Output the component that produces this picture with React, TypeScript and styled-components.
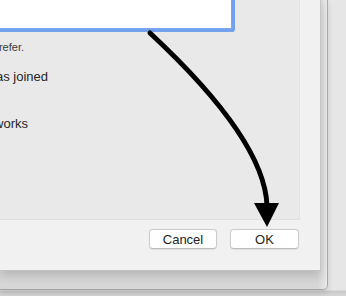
import styled, { createGlobalStyle } from "styled-components";

const Global = createGlobalStyle`
  html, body {
    margin: 0;
    padding: 0;
  }
  body {
    width: 346px;
    height: 296px;
    overflow: hidden;
    background: linear-gradient(#e6e6e6 0, #e6e6e6 290px, #cacaca 291px, #d6d6d6 296px);
    font-family: "Liberation Sans", Arial, sans-serif;
  }
`;

const Window = styled.div`
  position: relative;
  width: 328px;
  height: 290px;
  box-sizing: border-box;
  border-right: 1px solid #a9a9a9;
  border-bottom: 1px solid #a4a4a4;
  border-bottom-right-radius: 5px;
  background: linear-gradient(90deg, #d6d6d6 318px, #e9e9e9 327px);
  box-shadow: 0 3px 6px rgba(0, 0, 0, 0.12);
  overflow: hidden;
`;

const Sheet = styled.div`
  width: 321px;
  height: 271px;
  box-sizing: border-box;
  background: #f1f1f1;
  border-right: 1px solid #c6c6c6;
  border-bottom: 1px solid #c2c2c2;
  box-shadow: 0 4px 10px rgba(0, 0, 0, 0.16);
  display: flex;
  flex-direction: column;
`;

const Panel = styled.div`
  width: 300px;
  height: 220px;
  box-sizing: border-box;
  background: #e9e9e9;
  border-right: 1px solid #e2e2e2;
  border-bottom: 1px solid #e0e0e0;
  overflow: hidden;
`;

const Content = styled.div`
  margin-left: -260px;
  display: flex;
  flex-direction: column;
`;

const Field = styled.div`
  width: 492px;
  height: 60px;
  margin-top: -31px;
  box-sizing: border-box;
  background: #fff;
  border: 1px solid #7aa7ee;
  box-shadow: 0 0 0 3px #72a2ef;
  border-radius: 1px;
`;

const Line = styled.div<{ $end: number; $size: number; $gap: number }>`
  width: ${(p) => 260 + p.$end}px;
  margin-top: ${(p) => p.$gap}px;
  text-align: right;
  white-space: nowrap;
  font-size: ${(p) => p.$size}px;
  line-height: ${(p) => p.$size + 3}px;
  color: ${(p) => (p.$size < 13 ? "#3a3a3a" : "#262626")};
`;

const Footer = styled.div`
  display: flex;
  justify-content: flex-end;
  gap: 13px;
  padding: 9px 21px 0 0;
`;

const Button = styled.button<{ $w: number }>`
  width: ${(p) => p.$w}px;
  height: 20px;
  box-sizing: border-box;
  background: #fff;
  border: 1px solid #cdcdcd;
  border-bottom-color: #bdbdbd;
  border-radius: 4px;
  font-family: "Liberation Sans", Arial, sans-serif;
  font-size: 13px;
  color: #242424;
  padding: 0;
  box-shadow: 0 0.5px 1px rgba(0, 0, 0, 0.08);
`;

const Arrow = styled.svg`
  position: absolute;
  left: 0;
  top: 0;
  pointer-events: none;
`;

export default function App() {
  return (
    <>
      <Global />
      <Window>
        <Sheet>
          <Panel>
            <Content>
              <Field />
              <Line $end={24} $size={11} $gap={11}>
                Choose the networks you prefer.
              </Line>
              <Line $end={48} $size={13} $gap={15}>
                Notify when a new device has joined
              </Line>
              <Line $end={28} $size={13} $gap={31}>
                Ask to join new networks
              </Line>
            </Content>
          </Panel>
          <Footer>
            <Button $w={68}>Cancel</Button>
            <Button $w={69}>OK</Button>
          </Footer>
        </Sheet>
        <Arrow width="328" height="290" viewBox="0 0 328 290">
          <path
            d="M150 33 Q265 140 267 206"
            fill="none"
            stroke="#000"
            strokeWidth="5"
            strokeLinecap="round"
          />
          <polygon points="254,203 279,203 267,227" fill="#000" />
        </Arrow>
      </Window>
    </>
  );
}
